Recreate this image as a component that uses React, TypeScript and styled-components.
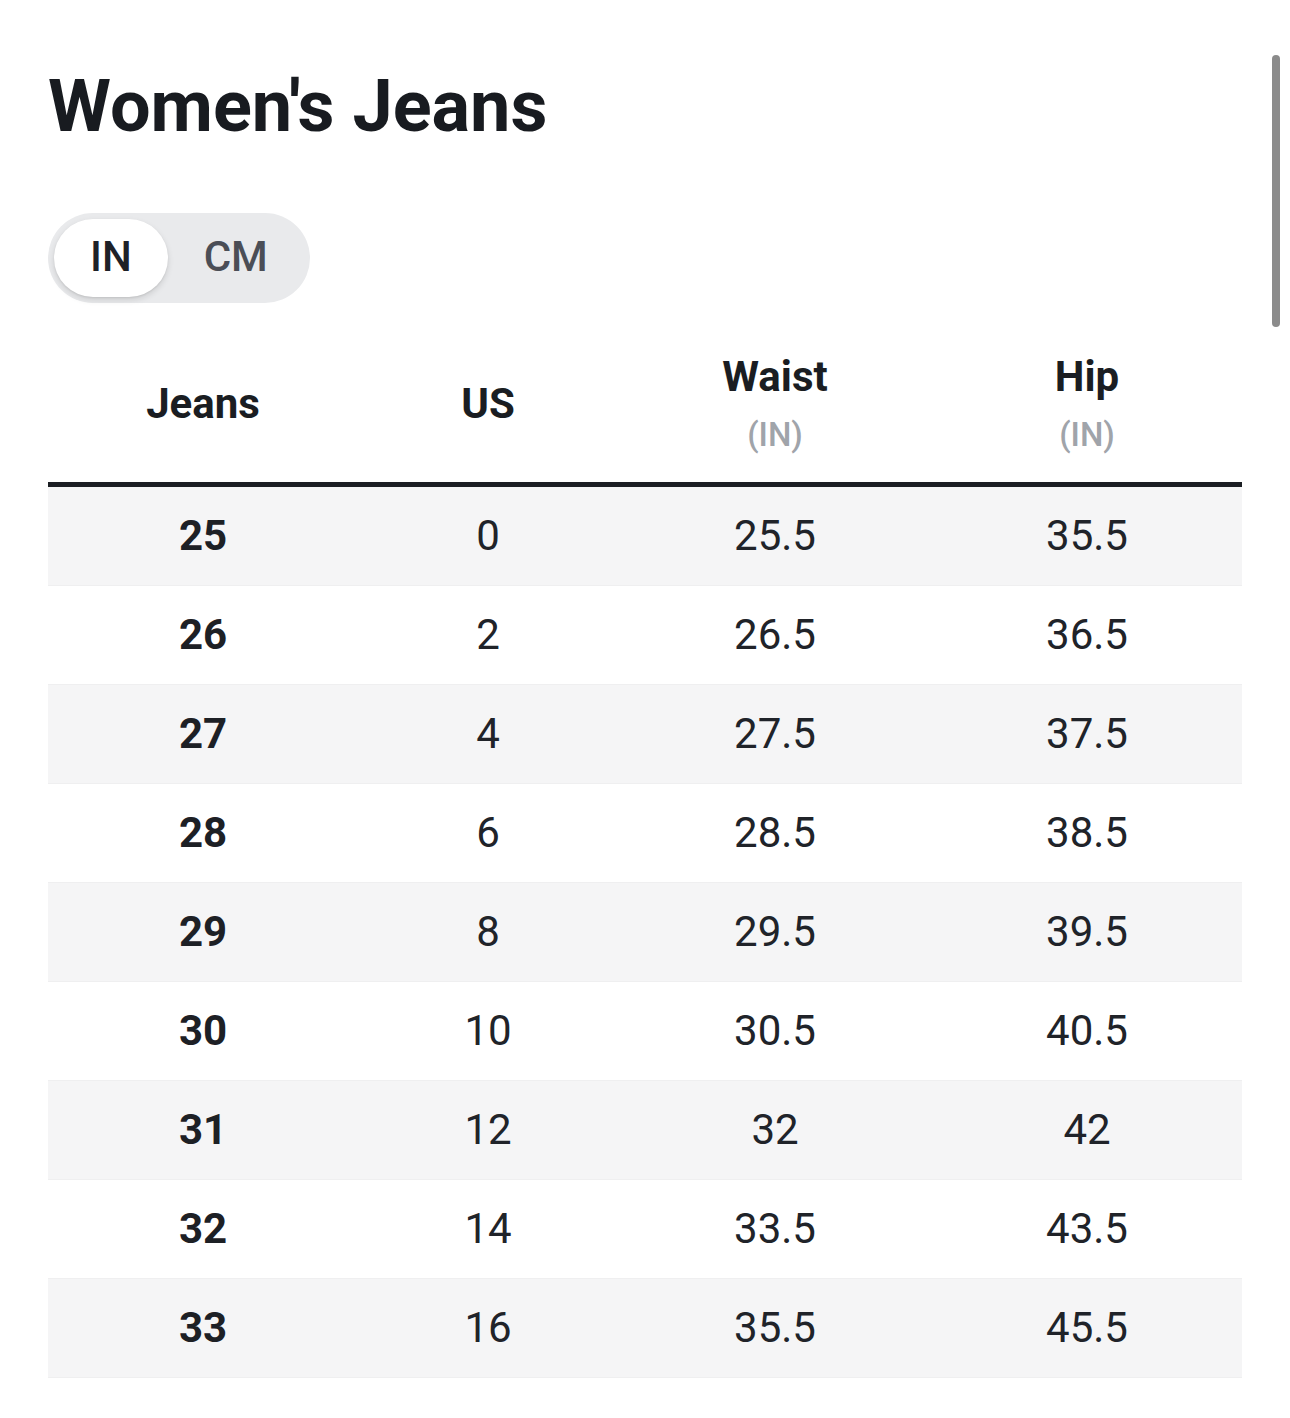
import React, { useState } from "react";
import styled, { createGlobalStyle } from "styled-components";

const GlobalStyle = createGlobalStyle`
  html, body {
    margin: 0;
    padding: 0;
    background: #ffffff;
  }
  body {
    font-family: Roboto, "Liberation Sans", Arial, sans-serif;
    color: #1c1f24;
  }
`;

const Page = styled.div`
  position: relative;
  padding: 64px 48px 40px;
`;

const Title = styled.h1`
  margin: 0;
  font-size: 72px;
  line-height: 1.2;
  font-weight: 700;
  color: #181b20;
`;

const Toggle = styled.div`
  display: inline-flex;
  margin-top: 63px;
  padding: 6px;
  border-radius: 46px;
  background: #e9eaec;
`;

const ToggleButton = styled.button<{ $active: boolean }>`
  height: 78px;
  padding: 0 36px 3px;
  border: none;
  border-radius: 39px;
  font-family: Roboto, "Liberation Sans", Arial, sans-serif;
  font-size: 42px;
  font-weight: 500;
  cursor: pointer;
  background: ${(p) => (p.$active ? "#ffffff" : "transparent")};
  color: ${(p) => (p.$active ? "#1e2127" : "#4b4e56")};
  box-shadow: ${(p) =>
    p.$active ? "0 3px 6px rgba(0, 0, 0, 0.12), 0 1px 2px rgba(0, 0, 0, 0.08)" : "none"};
`;

const Table = styled.table`
  width: 100%;
  margin-top: 22px;
  border-collapse: collapse;
  table-layout: fixed;
`;

const HeadCell = styled.th`
  padding: 27px 0;
  text-align: center;
  vertical-align: middle;
  border-bottom: 5px solid #1b1e23;
`;

const HeadInner = styled.div`
  display: flex;
  flex-direction: column;
  align-items: center;
  gap: 13px;
`;

const HeadLabel = styled.span`
  font-size: 42px;
  line-height: 50px;
  font-weight: 700;
  color: #1a1d22;
`;

const HeadUnit = styled.span`
  font-size: 33px;
  line-height: 40px;
  font-weight: 500;
  color: #a0a4aa;
`;

const Row = styled.tr<{ $shaded: boolean }>`
  background: ${(p) => (p.$shaded ? "#f5f5f6" : "#ffffff")};
  border-bottom: 1px solid #efeff0;
`;

const Cell = styled.td<{ $bold?: boolean }>`
  height: 98px;
  padding: 0;
  text-align: center;
  vertical-align: middle;
  font-size: 42px;
  line-height: 50px;
  font-weight: ${(p) => (p.$bold ? 700 : 400)};
  color: ${(p) => (p.$bold ? "#1d2025" : "#202329")};
`;

const ScrollThumb = styled.div`
  position: absolute;
  top: 55px;
  right: 10px;
  width: 8px;
  height: 272px;
  border-radius: 4px;
  background: #8b8b8b;
`;

const rows = [
  ["25", "0", "25.5", "35.5"],
  ["26", "2", "26.5", "36.5"],
  ["27", "4", "27.5", "37.5"],
  ["28", "6", "28.5", "38.5"],
  ["29", "8", "29.5", "39.5"],
  ["30", "10", "30.5", "40.5"],
  ["31", "12", "32", "42"],
  ["32", "14", "33.5", "43.5"],
  ["33", "16", "35.5", "45.5"],
];

const App = () => {
  const [unit, setUnit] = useState<"IN" | "CM">("IN");

  return (
    <Page>
      <GlobalStyle />
      <Title>Women's Jeans</Title>
      <Toggle>
        <ToggleButton $active={unit === "IN"} onClick={() => setUnit("IN")}>
          IN
        </ToggleButton>
        <ToggleButton $active={unit === "CM"} onClick={() => setUnit("CM")}>
          CM
        </ToggleButton>
      </Toggle>
      <Table>
        <colgroup>
          <col style={{ width: 310 }} />
          <col style={{ width: 260 }} />
          <col style={{ width: 314 }} />
          <col style={{ width: 310 }} />
        </colgroup>
        <thead>
          <tr>
            <HeadCell>
              <HeadLabel>Jeans</HeadLabel>
            </HeadCell>
            <HeadCell>
              <HeadLabel>US</HeadLabel>
            </HeadCell>
            <HeadCell>
              <HeadInner>
                <HeadLabel>Waist</HeadLabel>
                <HeadUnit>(IN)</HeadUnit>
              </HeadInner>
            </HeadCell>
            <HeadCell>
              <HeadInner>
                <HeadLabel>Hip</HeadLabel>
                <HeadUnit>(IN)</HeadUnit>
              </HeadInner>
            </HeadCell>
          </tr>
        </thead>
        <tbody>
          {rows.map((r, i) => (
            <Row key={r[0]} $shaded={i % 2 === 0}>
              <Cell $bold>{r[0]}</Cell>
              <Cell>{r[1]}</Cell>
              <Cell>{r[2]}</Cell>
              <Cell>{r[3]}</Cell>
            </Row>
          ))}
        </tbody>
      </Table>
      <ScrollThumb />
    </Page>
  );
};

export default App;
